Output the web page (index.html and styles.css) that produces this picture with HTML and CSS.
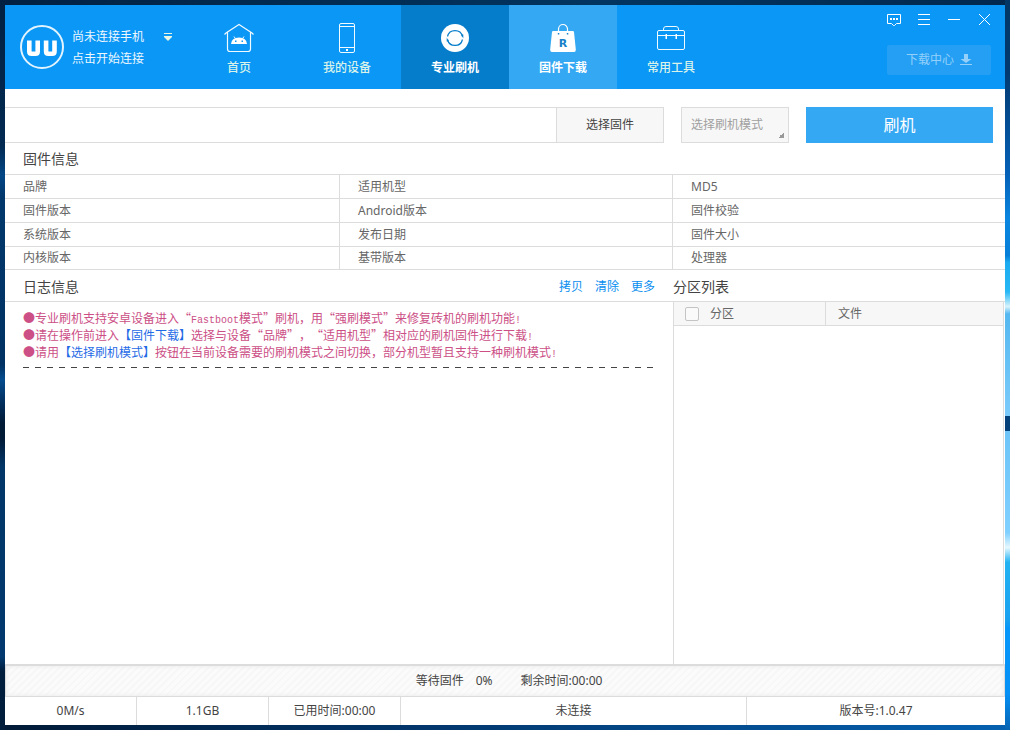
FILE: index.html
```html
<!DOCTYPE html>
<html lang="zh-CN">
<head>
<meta charset="utf-8">
<title>专业刷机</title>
<link rel="stylesheet" href="styles.css">
</head>
<body>
<div class="window">
  <header class="header">
    <div class="device">
      <svg class="logo" viewBox="0 0 44 44" width="44" height="44" fill="none" stroke="#fff">
        <circle cx="22" cy="22" r="21" stroke="#e4f4ff" stroke-width="2"/>
        <path d="M9.300 15.500v11q0 2.200 2.200 2.200h4q2.200 0 2.200-2.200v-11M26.100 15.500v11q0 2.200 2.200 2.200h4q2.200 0 2.200-2.200v-11" stroke-width="4.600"/>
      </svg>
      <div class="device-text">
        <div>尚未连接手机</div>
        <div>点击开始连接</div>
      </div>
      <button class="device-toggle" aria-label="切换设备">
        <svg viewBox="0 0 10 10" width="10" height="10" fill="#e9f6e4"><path d="M1 1h8v1H1zM1 4h8v1L5 9 1 5z"/></svg>
      </button>
    </div>
    <nav class="nav">
      <a class="tab" href="#">
        <svg viewBox="0 0 32 32" width="32" height="32" fill="none" stroke="#f0faff" stroke-width="1.200">
          <path d="M1.500 12.500 3 11 16 2.500 29 11l1.500 1.500M4.500 10.500V27q0 2.500 2.500 2.500h18q2.500 0 2.500-2.500V10.500"/>
          <path d="M8 22q.5-6.500 8-6.500t8 6.500z" fill="#fff" stroke="none"/>
          <path d="m11 14.500 2 3m8-3-2 3" stroke-width="1"/>
          <path d="M12 18.500h1.500v1.500H12zm6.500 0H20v1.500h-1.500z" fill="#0a97f5" stroke="none"/>
        </svg>
        <span>首页</span>
      </a>
      <a class="tab" href="#">
        <svg viewBox="0 0 32 32" width="32" height="32" fill="none" stroke="#f0faff" stroke-width="1">
          <rect x="8.500" y="1.500" width="15" height="29" rx="1.500"/>
          <path d="M8.500 4.500h15M8.500 25.500h15"/><path d="M15 27h2v2h-2z" fill="#fff" stroke="none"/>
        </svg>
        <span>我的设备</span>
      </a>
      <a class="tab tab-current" href="#" aria-current="page">
        <svg viewBox="0 0 32 32" width="32" height="32" fill="none">
          <circle cx="16" cy="16" r="14" fill="#fff"/>
          <path d="M8.500 14.500A7.700 7.700 0 0 1 23.500 14.500M23.500 17.500A7.700 7.700 0 0 1 8.500 17.500" stroke="#067dcb" stroke-width="1.200"/>
          <path d="M22 12.500l2.300 0v4zM10 19.500l-2.300 0v-4z" fill="#067dcb"/>
        </svg>
        <span>专业刷机</span>
      </a>
      <a class="tab tab-hover" href="#">
        <svg viewBox="0 0 32 32" width="32" height="32" fill="none">
          <path d="M11.500 12V7a4.500 4.500 0 0 1 9 0v5" stroke="#fff" stroke-width="1.200"/>
          <path d="M6 9h20q.8 0 1 1l1.800 17.500q.2 2.500-1.800 2.500H5q-2 0-1.800-2.500L5 10q.2-1 1-1z" fill="#fff"/>
          <path d="M10.800 11h1.500v1.500h-1.500zm9 0h1.500v1.500h-1.500z" fill="#1685cf"/>
          <text class="bag-letter" x="16" y="25" text-anchor="middle">R</text>
        </svg>
        <span>固件下载</span>
      </a>
      <a class="tab" href="#">
        <svg viewBox="0 0 32 32" width="32" height="32" fill="none" stroke="#f0faff" stroke-width="1">
          <rect x="2.500" y="8.500" width="27" height="19" rx="1.500"/>
          <path d="M8.500 8V7q0-2.500 2.500-2.500h10q2.500 0 2.500 2.500v1M2.500 13.500h27"/>
          <path d="M10.500 12h1.500v5h-1.500zm10 0h1.500v5h-1.500z" fill="#fff" stroke="none"/>
        </svg>
        <span>常用工具</span>
      </a>
    </nav>
    <div class="header-side">
      <div class="controls">
        <button class="control" aria-label="反馈"><svg viewBox="0 0 16 16" width="16" height="16" fill="none" stroke="#fff"><path d="M1.500 2.500h13v9h-4l-2 2h-1l-2-2h-4z"/><path d="M4 6h2v2H4zm3 0h2v2H7zm3 0h2v2h-2z" fill="#fff" stroke="none"/></svg></button>
        <button class="control" aria-label="菜单"><svg viewBox="0 0 16 16" width="16" height="16" stroke="#fff"><path d="M2 2.500h12M2 7.500h12M2 12.500h12"/></svg></button>
        <button class="control" aria-label="最小化"><svg viewBox="0 0 16 16" width="16" height="16" stroke="#fff"><path d="M2 7.500h12"/></svg></button>
        <button class="control" aria-label="关闭"><svg viewBox="0 0 16 16" width="16" height="16" stroke="#fff"><path d="m3 2 11 11M14 2 3 13"/></svg></button>
      </div>
      <button class="downloads">
        <span>下载中心</span>
        <svg viewBox="0 0 12 12" width="12" height="12" fill="currentColor"><path d="M4 0h4v5h3.500L6 9 .5 5H4zM0 10h12v1H0z"/></svg>
      </button>
    </div>
  </header>

  <form class="toolbar">
    <input class="path" type="text" aria-label="固件路径">
    <button class="choose" type="button">选择固件</button>
    <select class="mode" aria-label="选择刷机模式"><option>选择刷机模式</option></select>
    <button class="flash" type="button">刷机</button>
  </form>

  <section>
    <h2 class="title">固件信息</h2>
    <table class="info">
      <tr><td class="col-a">品牌</td><td class="col-b">适用机型</td><td>MD5</td></tr>
      <tr><td>固件版本</td><td>Android版本</td><td>固件校验</td></tr>
      <tr><td>系统版本</td><td>发布日期</td><td>固件大小</td></tr>
      <tr><td>内核版本</td><td>基带版本</td><td>处理器</td></tr>
    </table>
  </section>

  <main class="panels">
    <section class="panel">
      <div class="panel-head">
        <h2 class="title">日志信息</h2>
        <div class="links"><a href="#">拷贝</a><a href="#">清除</a><a href="#">更多</a></div>
      </div>
      <div class="log">
        <p>●专业刷机支持安卓设备进入“<span class="latin">Fastboot</span>模式”刷机，用“强刷模式”来修复砖机的刷机功能<span class="latin">!</span></p>
        <p>●请在操作前进入<a href="#">【固件下载】</a>选择与设备“品牌”，“适用机型”相对应的刷机固件进行下载<span class="latin">!</span></p>
        <p>●请用<a href="#">【选择刷机模式】</a>按钮在当前设备需要的刷机模式之间切换，部分机型暂且支持一种刷机模式<span class="latin">!</span></p>
        <hr class="rule">
      </div>
    </section>
    <section class="panel">
      <div class="panel-head"><h2 class="title title-flush">分区列表</h2></div>
      <div class="partitions">
        <table class="list">
          <tr>
            <th class="list-part"><label class="check"><input type="checkbox">分区</label></th>
            <th>文件</th>
          </tr>
        </table>
      </div>
    </section>
  </main>

  <div class="progress">
    <span>等待固件</span><span>0%</span><span class="remaining">剩余时间:00:00</span>
  </div>
  <footer class="status">
    <div>0M/s</div><div>1.1GB</div><div>已用时间:00:00</div><div>未连接</div><div>版本号:1.0.47</div>
  </footer>
</div>
</body>
</html>
```

FILE: styles.css
```css
* { box-sizing: border-box; }

body {
  margin: 0;
  padding: 5px;
  height: 100vh;
  font: 12px/18px "Noto Sans", "Noto Sans CJK SC", sans-serif;
  color: #444;
  background:
    linear-gradient(#023766 0, #023a70 10%, #0561b8 24%, #0a86e0 30%, #067fd8 35%, #1cabf0 36%, #27b8f5 40%, #d8f3fc 42%, #55b8f0 43%, #7acbfb 57%, #033f78 57%, #033f78 59%, #6cc4f8 59%, #7fd0ff 73%, #e6f8ff 75%, #22b2f2 77%, #18a0f0 85%, #0797fa 86%, #0590f5 95%, #0563b2 100%) right / 5px 100% no-repeat,
    linear-gradient(#022142 0, #022a52 20%, #034686 24%, #02386c 27%, #013263 50%, #054c8e 52%, #023060 55%, #011a36 58%, #011a36 60%, #023668 64%, #02396e 90%, #011d3c 92%) left / 5px 100% no-repeat,
    linear-gradient(90deg, #022142, #023560 60%, #02284e) top / 100% 5px no-repeat,
    linear-gradient(90deg, #011a36, #02356a 40%, #0561b0) bottom / 100% 5px no-repeat;
}

button, input, select { font: inherit; color: inherit; margin: 0; padding: 0; border-radius: 0; }
button { border: 0; background: none; }
a { color: inherit; text-decoration: none; }
table { width: 100%; table-layout: fixed; border-spacing: 0; }

.window { height: 100%; display: flex; flex-direction: column; background: #fff; }

/* Header */
.header { display: flex; height: 84px; flex-shrink: 0; background: #0a97f5; }
.device { display: flex; align-items: flex-start; width: 180px; padding: 20px 0 0 15px; color: #eef8ff; }
.device-text { margin-left: 8px; padding-top: 1px; line-height: 22px; }
.device-toggle { display: flex; margin: 7px 0 0 19px; }
.nav { display: flex; }
.tab { display: flex; flex-direction: column; align-items: center; gap: 5px; width: 108px; padding-top: 17px; color: #d9f3ea; font-weight: 500; }
.tab-current { background: #067dcb; color: #fff; font-weight: 700; }
.tab-hover { background: #34a8f3; color: #fff; font-weight: 700; }
.bag-letter { font: 700 11px "DejaVu Sans", sans-serif; fill: #1680c8; }
.header-side { display: flex; flex-direction: column; align-items: flex-end; gap: 10px; margin-left: auto; }
.controls { display: flex; padding-right: 6px; }
.control { display: grid; place-items: center; width: 30px; height: 30px; }
.downloads { display: flex; align-items: center; justify-content: center; gap: 6px; width: 104px; height: 30px; margin-right: 14px; border-radius: 2px; background: #249ff3; color: #94d0fa; }

/* Firmware picker */
.toolbar { display: flex; padding: 18px 12px 0 0; }
.path { flex: 1; min-width: 0; height: 36px; border: solid #dcdcdc; border-width: 1px 0; outline: 0; padding: 0 18px; background: #fff; }
.choose { width: 108px; border: 1px solid #dcdcdc; background: #f7f7f7; }
.mode { width: 108px; margin: 0 17px; padding: 0 9px; border: 1px solid #dcdcdc; appearance: none; color: #a0a0a0; background: linear-gradient(135deg, transparent 50%, #999 50%) right 4px bottom 4px / 6px 6px no-repeat #f7f7f7; }
.flash { width: 187px; background: #34a8f3; color: #fff; font-size: 16px; }

/* Firmware details */
.title { margin: 0; padding-left: 18px; font-size: 14px; font-weight: 400; line-height: 31px; }
.title-flush { padding-left: 0; }
.info { color: #666; }
.info td { height: 24px; padding: 0 18px; border-top: 1px solid #dcdcdc; border-right: 1px solid #dcdcdc; }
.info td:last-child { border-right: 0; }
.info tr:last-child td { height: 23px; }
.col-a { width: 33.5%; }
.col-b { width: 33.3%; }

/* Log and partitions */
.panels { flex: 1; min-height: 0; display: grid; grid-template-columns: 668fr 332fr; }
.panel { display: flex; flex-direction: column; min-width: 0; }
.panel-head { display: flex; justify-content: space-between; height: 33px; padding-top: 1px; border: solid #dcdcdc; border-width: 1px 0; }
.links { display: flex; gap: 12px; padding-right: 18px; line-height: 31px; color: #0a8ff0; }
.log { padding: 7px 18px; font-family: "Noto Sans CJK SC", sans-serif; line-height: 17px; color: #cc4f86; text-spacing-trim: space-all; }
.log p { margin: 0; height: 17px; white-space: nowrap; }
.log a { color: #1f6be6; }
.latin { font-family: "Liberation Mono", monospace; font-size: 10px; line-height: 1; }
.rule { height: 1px; margin: 7px 0; border: 0; background: repeating-linear-gradient(90deg, #444 0 6px, transparent 6px 12px); }
.partitions { flex: 1; margin-right: 1px; border: solid #dcdcdc; border-width: 0 1px; }
.list { color: #666; background: #f7f7f7; }
.list th { height: 24px; padding: 0 12px; border-bottom: 1px solid #dcdcdc; font-weight: 400; text-align: left; }
.list .list-part { width: 152px; padding-left: 11px; border-right: 1px solid #dcdcdc; }
.check { display: flex; align-items: center; gap: 11px; }
.check input { appearance: none; width: 14px; height: 14px; border: 1px solid #c4c4c4; border-radius: 2px; background: #fafafa; }

/* Progress and status */
.progress { display: flex; align-items: center; justify-content: center; gap: 12px; height: 33px; flex-shrink: 0; padding-left: 8px; border: solid #dcdcdc; border-width: 2px 1px 1px; box-shadow: inset 0 0 4px #e8e8e8; background: repeating-linear-gradient(135deg, #fbfbfb 0 3px, #f7f7f7 3px 5px); }
.remaining { margin-left: 16px; }
.status { display: grid; grid-template-columns: 131px 132px 132px 346fr 259fr; flex-shrink: 0; line-height: 28px; text-align: center; }
.status div + div { border-left: 1px solid #dcdcdc; }
```
